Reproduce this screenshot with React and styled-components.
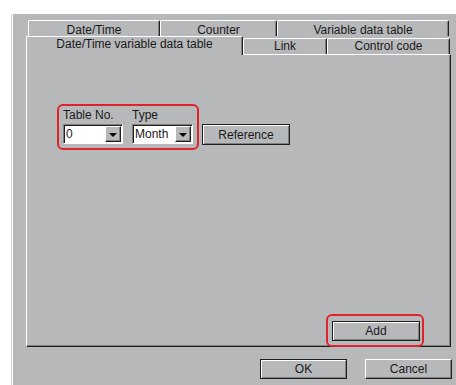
import React from 'react';
import styled, { createGlobalStyle } from 'styled-components';

const FACE = '#b7b8ba';
const DARK = '#1f1f1f';
const SHADOW = '#808080';
const RED = '#e0222c';
const FONT = '"Liberation Sans", Arial, sans-serif';

const GlobalStyle = createGlobalStyle`
  html, body { margin: 0; padding: 0; background: #fff; }
  body {
    font-family: ${FONT};
    font-size: 12px;
    font-weight: 400;
    color: #1a1a1a;
    overflow: hidden;
  }
`;

const Window = styled.div`
  box-sizing: border-box;
  margin: 14px 0 0 11px;
  height: 371px;
  background: ${FACE};
  border-left: 1px solid #d6d6d6;
  box-shadow: inset 1px 0 0 #fff;
  padding: 6px 0 0 14px;
`;

const TabRow = styled.div`
  display: flex;
  align-items: flex-start;
  height: ${p => (p.$front ? 18 : 16)}px;
  margin-left: ${p => (p.$front ? 0 : 2)}px;
  position: relative;
  z-index: ${p => (p.$front ? 2 : 1)};
`;

const Tab = styled.div`
  box-sizing: border-box;
  flex: none;
  width: ${p => p.$w}px;
  height: ${p => (p.$active ? 19 : 16)}px;
  margin-top: ${p => (p.$front && !p.$active ? 2 : 0)}px;
  background: ${FACE};
  border-top: 1px solid #fff;
  border-left: 1px solid #fff;
  border-right: 1px solid ${DARK};
  border-radius: 2px 2px 0 0;
  box-shadow: inset -1px 0 0 ${SHADOW};
  padding-top: ${p => (p.$front ? 0 : 2)}px;
  line-height: 14px;
  text-align: center;
  white-space: nowrap;
`;

const Panel = styled.div`
  box-sizing: border-box;
  width: 425px;
  height: 293px;
  background: ${FACE};
  border-top: 1px solid #fff;
  border-left: 1px solid #fff;
  border-right: 1px solid ${DARK};
  border-bottom: 1px solid ${DARK};
  box-shadow: inset -1px -1px 0 ${SHADOW};
  display: flex;
  flex-direction: column;
  padding: 49px 0 0 30px;
`;

const GroupRow = styled.div`
  display: flex;
  align-items: flex-end;
`;

const Highlight = styled.div`
  border: 2px solid ${RED};
  border-radius: 6px;
  padding: ${p => p.$pad};
  display: flex;
  gap: 9px;
`;

const Field = styled.div`
  display: flex;
  flex-direction: column;
  gap: 2px;
`;

const Label = styled.span`
  line-height: 14px;
  white-space: nowrap;
`;

const Combo = styled.div`
  box-sizing: border-box;
  width: ${p => p.$w}px;
  height: 20px;
  display: flex;
  background: #fff;
  border: 1px solid;
  border-color: ${SHADOW} #fff #fff ${SHADOW};
  box-shadow: inset 1px 1px 0 ${DARK};
`;

const ComboText = styled.span`
  flex: 1;
  padding-left: 2px;
  line-height: 18px;
  white-space: nowrap;
`;

const DropButton = styled.span`
  box-sizing: border-box;
  width: 16px;
  margin: 1px 1px 1px 0;
  background: ${FACE};
  border: 1px solid;
  border-color: #fff ${DARK} ${DARK} #fff;
  box-shadow: inset -1px -1px 0 ${SHADOW};
  display: flex;
  align-items: center;
  justify-content: center;
`;

const Arrow = styled.span`
  width: 0;
  height: 0;
  border-left: 4px solid transparent;
  border-right: 4px solid transparent;
  border-top: 4px solid #000;
  margin-top: 1px;
`;

const Button = styled.button`
  box-sizing: border-box;
  flex: none;
  width: ${p => p.$w}px;
  height: ${p => p.$h}px;
  margin: ${p => p.$m || 0};
  padding: 0;
  background: ${FACE};
  font-family: ${FONT};
  font-size: 12px;
  font-weight: 400;
  color: #1a1a1a;
  border: 1px solid;
  border-color: ${p => (p.$framed ? DARK : `#fff ${DARK} ${DARK} #fff`)};
  box-shadow: ${p =>
    p.$framed
      ? `inset 1px 1px 0 #fff, inset -1px -1px 0 ${SHADOW}`
      : `inset -1px -1px 0 ${SHADOW}`};
`;

const AddRow = styled.div`
  margin-top: auto;
  align-self: flex-end;
  margin-right: 26px;
  margin-bottom: -1px;
`;

const Footer = styled.div`
  display: flex;
  justify-content: flex-end;
  gap: 18px;
  padding-right: 4px;
  margin-top: 12px;
`;

export default function App() {
  return (
    <>
      <GlobalStyle />
      <Window>
        <TabRow>
          <Tab $w={132}>Date/Time</Tab>
          <Tab $w={117}>Counter</Tab>
          <Tab $w={172}>Variable data table</Tab>
        </TabRow>
        <TabRow $front>
          <Tab $front $active $w={217}>Date/Time variable data table</Tab>
          <Tab $front $w={84}>Link</Tab>
          <Tab $front $w={123}>Control code</Tab>
        </TabRow>
        <Panel>
          <GroupRow>
            <Highlight $pad="2px 4px 4px 4px">
              <Field>
                <Label>Table No.</Label>
                <Combo $w={60}>
                  <ComboText>0</ComboText>
                  <DropButton><Arrow /></DropButton>
                </Combo>
              </Field>
              <Field>
                <Label>Type</Label>
                <Combo $w={61}>
                  <ComboText>Month</ComboText>
                  <DropButton><Arrow /></DropButton>
                </Combo>
              </Field>
            </Highlight>
            <Button $framed $w={88} $h={21} $m="0 0 5px 3px">Reference</Button>
          </GroupRow>
          <AddRow>
            <Highlight $pad="5px 2px 4px 4px">
              <Button $framed $w={88} $h={20}>Add</Button>
            </Highlight>
          </AddRow>
        </Panel>
        <Footer>
          <Button $framed $w={87} $h={20}>OK</Button>
          <Button $w={87} $h={20}>Cancel</Button>
        </Footer>
      </Window>
    </>
  );
}
